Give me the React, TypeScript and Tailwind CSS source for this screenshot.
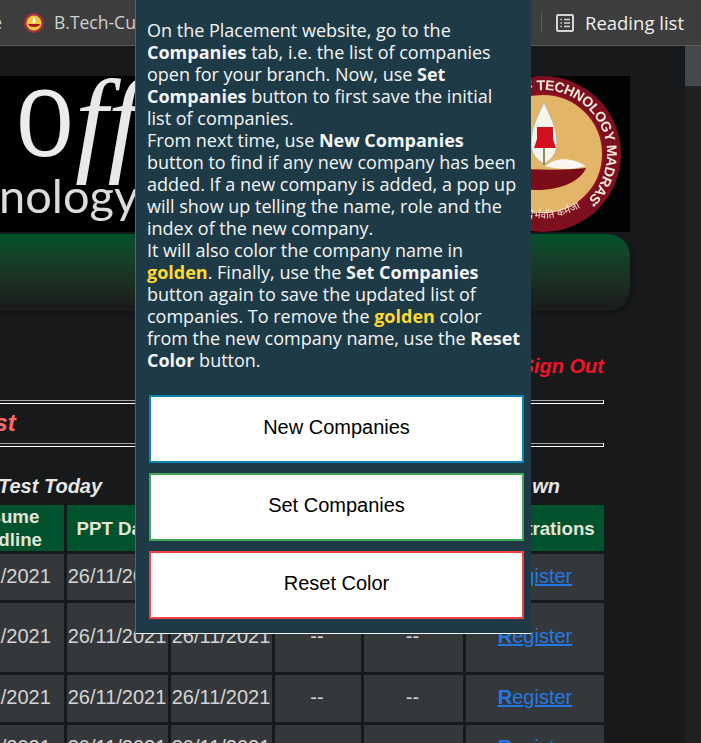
const rows = [
  { h: "h-[46px]", d: ["25/11/2021", "26/11/2021", "26/11/2021", "--", "--"] },
  { h: "h-[69px]", d: ["25/11/2021", "26/11/2021", "26/11/2021", "--", "--"] },
  { h: "h-[47px]", d: ["25/11/2021", "26/11/2021", "26/11/2021", "--", "--"] },
  { h: "h-[47px]", d: ["30/11/2021", "30/11/2021", "30/11/2021", "--", "--"] },
];

const heads = ["Resume Deadline", "PPT Date", "Test Date", "CTC", "Shortlist", "Registrations"];

function Seal() {
  return (
    <svg width="170" height="156" viewBox="0 0 170 156" className="shrink-0 blur-[0.4px]">
      <rect width="170" height="156" fill="#010302" />
      <circle cx="83" cy="78" r="78" fill="#7e0f1f" />
      <circle cx="83" cy="78" r="60" fill="#e2b568" stroke="#8f1222" strokeWidth="2" />
      <defs>
        <path id="ring" d="M 19 78 a 64 64 0 1 1 128 0 a 64 64 0 1 1 -128 0" />
        <path id="lower" d="M 20 100 a 68 68 0 0 0 126 0" />
      </defs>
      <text fill="#f5e9dc" fontFamily="Liberation Sans, sans-serif" fontWeight="700" fontSize="14">
        <textPath href="#ring" textLength="251">INSTITUTE OF TECHNOLOGY MADRAS</textPath>
      </text>
      <text fill="#f5e9dc" fontFamily="Noto Sans, DejaVu Sans, sans-serif" fontSize="10">
        <textPath href="#lower" startOffset="50" textLength="70">सिद्धिर्भवति कर्मजा</textPath>
      </text>
      <circle cx="134" cy="129" r="1.6" fill="#f5e9dc" />
      <g transform="translate(5 0)">
        <path d="M79 26 C72 42 66 52 66 68 C66 78 72 84 79 88 C86 84 92 78 92 68 C92 52 86 42 79 26Z" fill="#f7f4ea" stroke="#b9b6a0" strokeWidth="1" />
        <path d="M72 51 H88 V63 L91 72 H69 L72 63Z" fill="#d3101f" />
        <rect x="78" y="72" width="2" height="17" fill="#8c8c62" />
        <path d="M80 90 C92 80 108 82 121 90 C108 94 92 94 80 90Z" fill="#f8f6ee" />
        <path d="M0 90 C40 92 90 96 121 92 C116 104 98 114 72 114 C40 114 10 105 0 90Z" fill="#7a0d18" />
        <path d="M0 119 C20 123 50 125 70 122 C50 128 24 128 0 124Z" fill="#f5e7c6" />
      </g>
    </svg>
  );
}

export default function App() {
  return (
    <div className="relative h-[743px] w-[701px] overflow-hidden bg-[#18191a] font-['Liberation_Sans',sans-serif]">
      <header className="flex h-[46px] items-center border-b border-[#5c5c5c] bg-[#3d3d3d] font-['Open_Sans',sans-serif] text-[17.5px] text-[#cfcfcf]">
        <span className="-ml-[8px] w-[10px] overflow-hidden text-right">e</span>
        <svg width="20" height="20" viewBox="0 0 20 20" className="ml-[22px] shrink-0">
          <circle cx="10" cy="10" r="10" fill="#a5323a" />
          <circle cx="10" cy="10" r="7.5" fill="#f2c63c" />
          <path d="M4 11 H16 C15 15 5 15 4 11Z" fill="#a8121e" />
          <path d="M10 4 C8 7 8 10 10 10.5 C12 10 12 7 10 4Z" fill="#fafafa" />
        </svg>
        <span className="ml-[10px] whitespace-nowrap">B.Tech-Cu</span>
        <div className="ml-auto h-[20px] w-px bg-[#5f5f5f]" />
        <svg width="18" height="18" viewBox="0 0 18 18" className="ml-[14px] shrink-0" fill="none" stroke="#d5d5d5">
          <rect x="1" y="1" width="16" height="16" rx="1" strokeWidth="2" />
          <path d="M4.5 5.5h1.5M8 5.5h6M4.5 9h1.5M8 9h6M4.5 12.5h1.5M8 12.5h6" strokeWidth="1.5" />
        </svg>
        <span className="ml-[11px] mr-[17px] whitespace-nowrap text-[18.5px] text-[#efefef]">Reading list</span>
      </header>

      <div className="flex h-[697px]">
        <main className="w-[685px] overflow-hidden">
          <div className="-ml-[58px] w-[743px] pt-[30px]">
            <div className="flex h-[156px] w-[688px] justify-between bg-black">
              <svg width="200" height="156" viewBox="0 0 200 156" className="shrink-0 blur-[0.5px]">
                <text x="100" y="79" fill="#ececec" stroke="#ececec" strokeWidth="2.2" fontFamily="Liberation Serif, serif" fontSize="98" transform="scale(.76 1)">O</text>
                <text x="133" y="84" fill="#e8e8e8" fontFamily="Liberation Serif, serif" fontStyle="italic" fontSize="117">ff</text>
                <text x="57" y="137" fill="#dcdcdc" fontFamily="Lato, sans-serif" fontSize="47">nology</text>
              </svg>
              <Seal />
            </div>
            <div className="mt-[2px] h-[77px] w-[688px] rounded-r-[22px] bg-gradient-to-b from-[#00532c] to-[#1a1a1b] shadow-[2px_2px_5px_rgba(0,0,0,.25)]" />
            <div className="w-[662px]">
              <p className="mt-[44px] h-[23px] text-right text-[20px] font-bold italic leading-[23px] text-[#f01428]">Sign Out</p>
              <div className="mt-[22px] h-[4px] border border-[#a8a8a8] border-r-white border-b-white" />
              <p className="mt-[5px] h-[27px] pl-[31px] text-[24px] font-bold italic leading-[27px] text-[#ff6b6b]">List</p>
              <div className="mt-[7px] h-[4px] border border-[#a8a8a8] border-r-white border-b-white" />
              <div className="mt-[28px] flex h-[23px] justify-between pl-[56px] pr-[44px] text-[20px] font-bold italic leading-[23px] text-[#e6e6e6]">
                <span>Test Today</span>
                <span>wn</span>
              </div>
              <div className="mt-[7px] grid grid-cols-[122px_101px_101px_86px_99px_138px] gap-[3px] text-[20px] text-[#d4d4d4]">
                {heads.map((h) => (
                  <div key={h} className="flex h-[46px] items-center justify-center bg-[#00532c] text-center text-[18.72px] font-bold leading-[23px] text-[#e4e4da]">
                    {h === "Resume Deadline" ? (<span>Resume<br />Deadline</span>) : h}
                  </div>
                ))}
                {rows.map((r, i) => (
                  <div key={i} className="contents">
                    {r.d.map((c, j) => (
                      <div key={j} className={`flex ${r.h} items-center justify-center whitespace-nowrap bg-[#35383b] pb-[3px] ${j === 0 ? "pr-[3px]" : j < 3 ? "pr-[1px]" : "pr-[2px]"}`}>{c}</div>
                    ))}
                    <div className={`flex ${r.h} items-center justify-center bg-[#35383b] pb-[3px]`}>
                      <a href="#" className="text-[#2378e6] underline"><b>R</b>egister</a>
                    </div>
                  </div>
                ))}
              </div>
            </div>
          </div>
        </main>
        <aside className="w-[16px] bg-[#1f2122]">
          <div className="h-[40px] bg-[#46494c]" />
        </aside>
      </div>

      <section className="absolute left-[135px] top-0 h-[634px] w-[396px] border-b border-l border-b-[#f0f0f0] border-l-[#52646c] bg-[#1f3a47]">
        <p className="ml-[11px] mt-[19px] whitespace-nowrap font-['Open_Sans',sans-serif] text-[18px] leading-[22px] text-[#f2f5f5]">
          On the Placement website, go to the<br />
          <b>Companies</b> tab, i.e. the list of companies<br />
          open for your branch. Now, use <b>Set</b><br />
          <b>Companies</b> button to first save the initial<br />
          list of companies.<br />
          From next time, use <b>New Companies</b><br />
          button to find if any new company has been<br />
          added. If a new company is added, a pop up<br />
          will show up telling the name, role and the<br />
          index of the new company.<br />
          It will also color the company name in<br />
          <b className="text-[#fdd835]">golden</b>. Finally, use the <b>Set Companies</b><br />
          button again to save the updated list of<br />
          companies. To remove the <b className="text-[#fdd835]">golden</b> color<br />
          from the new company name, use the <b>Reset</b><br />
          <b>Color</b> button.
        </p>
        <div className="ml-[13px] mt-[24px] flex w-[375px] flex-col gap-[10px]">
          <button className="h-[68px] border-2 border-[#0a85b5] bg-white pb-[4px] text-[20px] text-black">New Companies</button>
          <button className="h-[68px] border-2 border-[#3fa854] bg-white pb-[4px] text-[20px] text-black">Set Companies</button>
          <button className="h-[68px] border-2 border-[#f44040] bg-white pb-[4px] text-[20px] text-black">Reset Color</button>
        </div>
      </section>
    </div>
  );
}
